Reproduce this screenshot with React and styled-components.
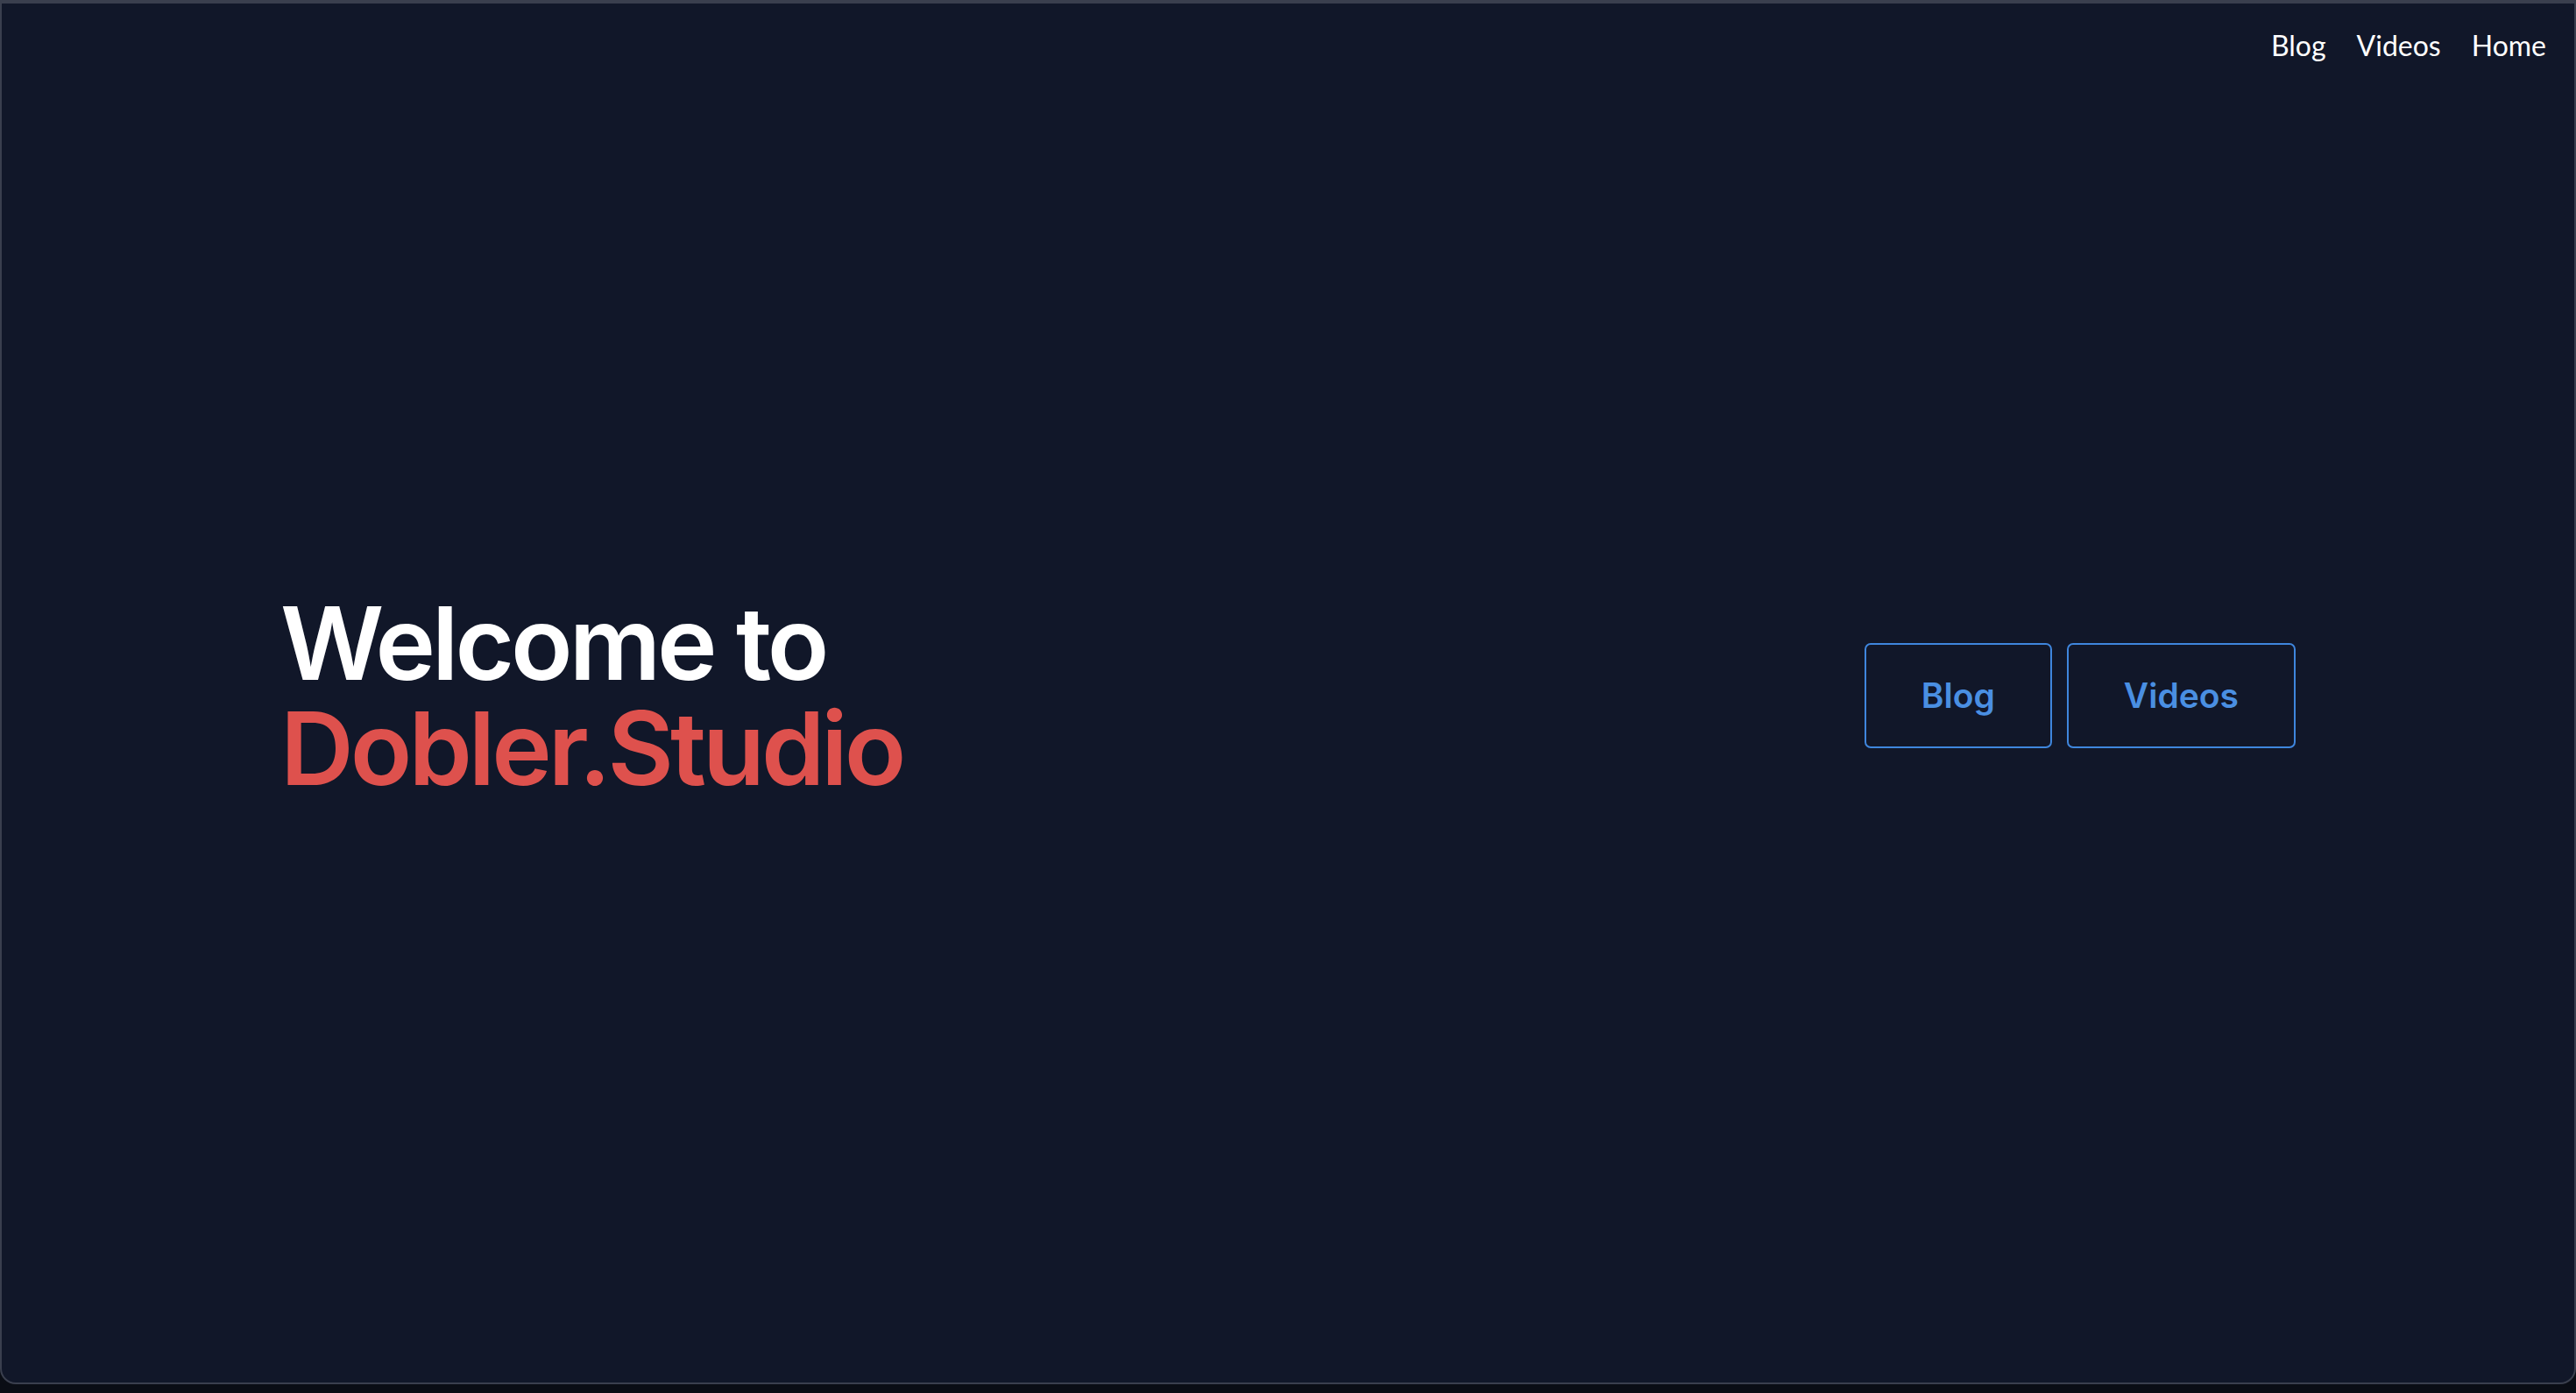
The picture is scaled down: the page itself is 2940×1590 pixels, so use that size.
import React from 'react';
import styled, { createGlobalStyle } from 'styled-components';

const GlobalStyle = createGlobalStyle`
  html, body {
    margin: 0;
    padding: 0;
    background: #0a0d15;
  }
  body {
    font-family: Inter, "Liberation Sans", sans-serif;
  }
`;

const Frame = styled.div`
  box-sizing: border-box;
  height: 1580px;
  display: flex;
  flex-direction: column;
  background: #111729;
  border: 2px solid #3a3f4e;
  border-top-width: 4px;
  border-radius: 0 0 18px 18px;
`;

const Nav = styled.nav`
  display: flex;
  justify-content: flex-end;
  gap: 35px;
  padding: 28px 32px 0 0;

  a {
    color: #ffffff;
    font-family: Lato, Inter, sans-serif;
    font-size: 32px;
    text-decoration: none;
  }
`;

const Hero = styled.main`
  flex: 1;
  display: flex;
  align-items: center;
  justify-content: space-between;
  padding: 0 318px 62px 318px;
`;

const Title = styled.h1`
  margin: 0;
  font-size: 116px;
  font-weight: 600;
  line-height: 120px;
  letter-spacing: -4px;
  color: #ffffff;

  span {
    display: block;
    color: #de514d;
  }
`;

const Buttons = styled.div`
  display: flex;
  gap: 17px;
`;

const Button = styled.a`
  display: flex;
  align-items: center;
  justify-content: center;
  box-sizing: border-box;
  height: 120px;
  padding: 0 63px;
  border: 2px solid #3f86dd;
  border-radius: 7px;
  color: #4a8fe2;
  font-size: 39px;
  font-weight: 600;
  text-decoration: none;
`;

export default function App() {
  return (
    <>
      <GlobalStyle />
      <Frame>
        <Nav>
          <a href="#blog">Blog</a>
          <a href="#videos">Videos</a>
          <a href="#home">Home</a>
        </Nav>
        <Hero>
          <Title>
            Welcome to
            <span>Dobler.Studio</span>
          </Title>
          <Buttons>
            <Button href="#blog">Blog</Button>
            <Button href="#videos">Videos</Button>
          </Buttons>
        </Hero>
      </Frame>
    </>
  );
}
